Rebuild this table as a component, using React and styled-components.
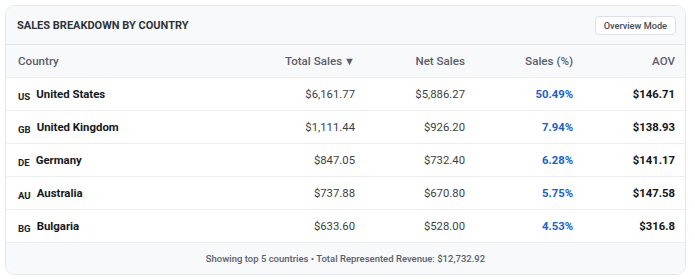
import React from 'react';
import styled, { createGlobalStyle } from 'styled-components';

const GlobalStyle = createGlobalStyle`
  body {
    margin: 5px;
    background: #ffffff;
    font-family: Roboto, "Open Sans", sans-serif;
    font-stretch: 92%;
  }
`;

const Card = styled.div`
  width: 681px;
  box-sizing: border-box;
  border: 1px solid #e3e6ea;
  border-radius: 10px;
  overflow: hidden;
  background: #ffffff;
`;

const CardHeader = styled.div`
  display: flex;
  justify-content: space-between;
  align-items: center;
  height: 38px;
  padding: 0 9px 0 11px;
  background: #f8f9fb;
  border-bottom: 1px solid #e3e6ea;
`;

const Title = styled.h3`
  margin: 0;
  font-size: 11px;
  font-weight: 700;
  color: #2f3439;
`;

const ModeButton = styled.button`
  height: 19px;
  padding: 0 8px;
  background: #ffffff;
  border: 1px solid #dcdfe3;
  border-radius: 4px;
  font-family: inherit;
  font-stretch: inherit;
  font-size: 9.2px;
  font-weight: 500;
  color: #444b55;
`;

const Row = styled.div`
  display: grid;
  grid-template-columns: 1fr 124px 110px 108px 102px;
  align-items: center;
  height: 33px;
  background: ${p => (p.$head ? '#f8f9fb' : '#ffffff')};
  border-bottom: 1px solid #eceef1;
  box-sizing: border-box;
`;

const Cell = styled.div`
  padding: 0 10px 0 12px;
  text-align: ${p => (p.$left ? 'left' : 'right')};
  font-size: 11.3px;
  white-space: nowrap;
  color: ${p => p.$color || '#3a3f45'};
  font-weight: ${p => p.$weight || 400};
`;

const HeadCell = styled(Cell)`
  font-size: 11.6px;
  color: #5a6068;
  font-weight: 500;
`;

const SortArrow = styled.span`
  margin-left: 2px;
  font-size: 11px;
`;

const CountryCell = styled(Cell)`
  display: flex;
  align-items: baseline;
  gap: 6px;
  font-size: 11.4px;
  color: #15191e;
  font-weight: 700;
`;

const Code = styled.span`
  font-size: 9.6px;
  font-weight: 700;
  color: #1c2127;
  transform: translateY(2px);
`;

const Footer = styled.div`
  height: 31px;
  display: flex;
  align-items: center;
  justify-content: center;
  background: #f8f9fb;
  font-size: 9.5px;
  font-weight: 500;
  color: #5a6068;
`;

const rows = [
  { code: 'US', name: 'United States', total: '$6,161.77', net: '$5,886.27', pct: '50.49%', aov: '$146.71' },
  { code: 'GB', name: 'United Kingdom', total: '$1,111.44', net: '$926.20', pct: '7.94%', aov: '$138.93' },
  { code: 'DE', name: 'Germany', total: '$847.05', net: '$732.40', pct: '6.28%', aov: '$141.17' },
  { code: 'AU', name: 'Australia', total: '$737.88', net: '$670.80', pct: '5.75%', aov: '$147.58' },
  { code: 'BG', name: 'Bulgaria', total: '$633.60', net: '$528.00', pct: '4.53%', aov: '$316.8' },
];

export default function App() {
  return (
    <>
      <GlobalStyle />
      <Card>
        <CardHeader>
          <Title>SALES BREAKDOWN BY COUNTRY</Title>
          <ModeButton>Overview Mode</ModeButton>
        </CardHeader>
        <Row $head>
          <HeadCell $left>Country</HeadCell>
          <HeadCell>Total Sales<SortArrow>▼</SortArrow></HeadCell>
          <HeadCell>Net Sales</HeadCell>
          <HeadCell>Sales (%)</HeadCell>
          <HeadCell>AOV</HeadCell>
        </Row>
        {rows.map(r => (
          <Row key={r.code}>
            <CountryCell $left>
              <Code>{r.code}</Code>
              {r.name}
            </CountryCell>
            <Cell>{r.total}</Cell>
            <Cell>{r.net}</Cell>
            <Cell $color="#1a5fd0" $weight={700}>{r.pct}</Cell>
            <Cell $color="#111418" $weight={700}>{r.aov}</Cell>
          </Row>
        ))}
        <Footer>Showing top 5 countries • Total Represented Revenue: $12,732.92</Footer>
      </Card>
    </>
  );
}
